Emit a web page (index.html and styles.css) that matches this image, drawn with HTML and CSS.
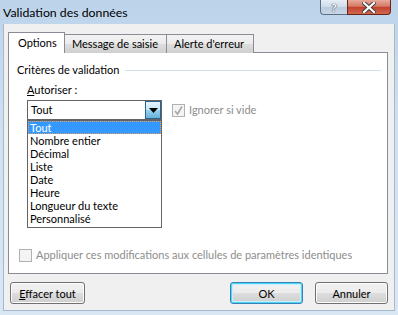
FILE: index.html
```html
<!DOCTYPE html>
<html lang="fr">
<head>
    <meta charset="UTF-8">
    <title>Validation des données</title>
    <link rel="stylesheet" href="styles.css">
</head>
<body>
    <div class="window">
        <div class="titlebar">
            <span class="title">Validation des données</span>
            <div class="caption-buttons">
                <span class="cap-btn help">?</span>
                <span class="cap-btn close">
                    <svg width="14" height="11" viewBox="0 0 14 11">
                        <path d="M2 1 L12 10 M12 1 L2 10" stroke="#3a3a3a" stroke-width="4" stroke-linecap="square"/>
                        <path d="M2 1 L12 10 M12 1 L2 10" stroke="#ffffff" stroke-width="2.2" stroke-linecap="square"/>
                    </svg>
                </span>
            </div>
        </div>
        <div class="client">
            <div class="tabs">
                <div class="tab active">Options</div>
                <div class="tab">Message de saisie</div>
                <div class="tab">Alerte d'erreur</div>
            </div>
            <div class="panel">
                <div class="group-title">
                    <span>Critères de validation</span>
                    <span class="rule"></span>
                </div>
                <div class="field-label"><u>A</u>utoriser :</div>
                <div class="combo-row">
                    <div class="combo">
                        <span class="combo-value">Tout</span>
                        <span class="combo-btn">
                            <svg width="9" height="5" viewBox="0 0 9 5"><path d="M0 0 H9 L4.5 5 Z" fill="#000"/></svg>
                        </span>
                    </div>
                    <label class="check disabled">
                        <span class="box checked">
                            <svg width="11" height="11" viewBox="0 0 11 11"><path d="M2 6 L4.5 9 L9 1.5" fill="none" stroke="#a8a8a8" stroke-width="1.6"/></svg>
                        </span>
                        Ignorer si vide
                    </label>
                    <ul class="dropdown">
                        <li class="selected">Tout</li>
                        <li>Nombre entier</li>
                        <li>Décimal</li>
                        <li>Liste</li>
                        <li>Date</li>
                        <li>Heure</li>
                        <li>Longueur du texte</li>
                        <li>Personnalisé</li>
                    </ul>
                </div>
                <label class="check disabled apply">
                    <span class="box"></span>
                    Appliquer ces modifications aux cellules de paramètres identiques
                </label>
            </div>
            <div class="button-row">
                <button class="btn"><u>E</u>ffacer tout</button>
                <span class="spacer"></span>
                <button class="btn default">OK</button>
                <button class="btn">Annuler</button>
            </div>
        </div>
    </div>
</body>
</html>
```

FILE: styles.css
```css
body {
    margin: 0;
    font-family: Lato, "Noto Sans", sans-serif;
    font-size: 11px;
    color: #000;
}
.window {
    width: 398px;
    height: 315px;
    box-sizing: border-box;
    background: linear-gradient(to bottom, #bcd3ea 0%, #cfe0f1 40%, #d9e7f5 100%);
    display: flex;
    flex-direction: column;
}
.titlebar {
    height: 24px;
    display: flex;
    align-items: flex-start;
    padding-left: 3px;
    padding-right: 7px;
}
.title {
    font-size: 12.3px;
    line-height: 14px;
    margin-top: 6px;
    flex: 1;
    white-space: nowrap;
}
.caption-buttons {
    display: flex;
    height: 15px;
}
.cap-btn {
    height: 14px;
    border: 1px solid #5d6f86;
    border-top: none;
    display: flex;
    align-items: center;
    justify-content: center;
    box-sizing: content-box;
}
.help {
    width: 26px;
    border-radius: 0 0 0 4px;
    background: linear-gradient(to bottom, #e6eef7 0%, #cfdcea 50%, #b9cbe0 51%, #c9d8e8 100%);
    color: #fff;
    font-weight: bold;
    font-size: 12px;
    line-height: 13px;
    text-shadow: 0 0 1px #2b3a4d, 0 0 1px #2b3a4d;
    border-right: none;
}
.close {
    width: 42px;
    border-radius: 0 0 4px 0;
    border-color: #6a2418;
    background: linear-gradient(to bottom, #e9a99b 0%, #d47a66 45%, #c2432d 52%, #d26850 100%);
}
.client {
    flex: 1;
    margin: 0 3px 4px 3px;
    background: #f0f0f0;
    border: 1px solid #a6b8cb;
    border-top: none;
    display: flex;
    flex-direction: column;
    padding: 8px 6px 0 4px;
    box-sizing: border-box;
    position: relative;
}
.tabs {
    display: flex;
    align-items: flex-end;
    height: 21px;
    margin-bottom: -1px;
    position: relative;
    z-index: 1;
}
.tab {
    height: 19px;
    line-height: 18px;
    padding: 0 0 0 7px;
    border: 1px solid #898c95;
    border-bottom: none;
    border-left: none;
    background: linear-gradient(to bottom, #f2f2f2 0%, #ebebeb 50%, #dddddd 51%, #cfcfcf 100%);
    box-sizing: border-box;
    white-space: nowrap;
}
.tab.active {
    height: 21px;
    line-height: 19px;
    background: #fff;
    border-left: 1px solid #898c95;
    padding-left: 9px;
    width: 57px;
}
.tab:nth-child(2) {
    width: 102px;
}
.tab:nth-child(3) {
    width: 87px;
}
.panel {
    height: 222px;
    width: 380px;
    box-sizing: border-box;
    background: #fff;
    border: 1px solid #898c95;
    display: flex;
    flex-direction: column;
    padding: 9px 6px 10px 8px;
}
.group-title {
    display: flex;
    align-items: center;
    line-height: 16px;
}
.rule {
    flex: 1;
    border-top: 1px solid #d5dfe5;
    margin-left: 6px;
    margin-top: 1px;
}
.field-label {
    line-height: 16px;
    margin: 4px 0 0 10px;
}
.combo-row {
    display: flex;
    align-items: center;
    margin: 2px 0 0 10px;
    position: relative;
}
.combo {
    width: 135px;
    height: 20px;
    box-sizing: border-box;
    border: 1px solid #646464;
    display: flex;
    align-items: center;
    background: #fff;
}
.combo-value {
    flex: 1;
    padding-left: 3px;
    line-height: 16px;
}
.combo-btn {
    width: 16px;
    height: 18px;
    box-sizing: border-box;
    border: 1px solid #2c628b;
    background: linear-gradient(to bottom, #e5f4fc 0%, #c4e5f6 50%, #98d1ef 51%, #68b3db 100%);
    display: flex;
    align-items: center;
    justify-content: center;
}
.check {
    display: flex;
    align-items: center;
    line-height: 16px;
    white-space: nowrap;
}
.check.disabled {
    color: #8d8d8d;
}
.combo-row .check {
    margin-left: 10px;
}
.box {
    width: 13px;
    height: 13px;
    box-sizing: border-box;
    border: 1px solid #b1b1b1;
    background: #f4f4f4;
    margin-right: 4px;
    display: flex;
    align-items: center;
    justify-content: center;
}
.dropdown {
    position: absolute;
    left: 0;
    top: 20px;
    width: 135px;
    box-sizing: border-box;
    margin: 0;
    padding: 0 0 2px 0;
    list-style: none;
    background: #fff;
    border: 1px solid #646464;
    z-index: 2;
}
.dropdown li {
    height: 13px;
    line-height: 13px;
    padding-left: 2px;
    box-sizing: border-box;
    white-space: nowrap;
}
.dropdown li.selected {
    background: #3399ff;
    color: #fff;
    border: 1px dotted #e8a060;
    line-height: 11px;
    padding-left: 1px;
}
.apply {
    margin-top: auto;
    margin-left: 2px;
}
.button-row {
    display: flex;
    margin-top: 8px;
    padding-left: 2px;
}
.spacer {
    flex: 1;
}
.btn {
    width: 73px;
    height: 22px;
    font-family: inherit;
    font-size: 11px;
    color: #000;
    border: 1px solid #707070;
    border-radius: 3px;
    background: linear-gradient(to bottom, #f2f2f2 0%, #ebebeb 50%, #dddddd 51%, #cfcfcf 100%);
    box-shadow: inset 0 0 0 1px #fcfcfc;
    padding: 0;
    margin-left: 12px;
}
.btn:first-child {
    margin-left: 0;
    width: 75px;
}
.btn.default {
    border-color: #3c7fb1;
    box-shadow: inset 0 0 0 1px #48d8fb, inset 0 0 0 2px #c6eefc;
}
```
